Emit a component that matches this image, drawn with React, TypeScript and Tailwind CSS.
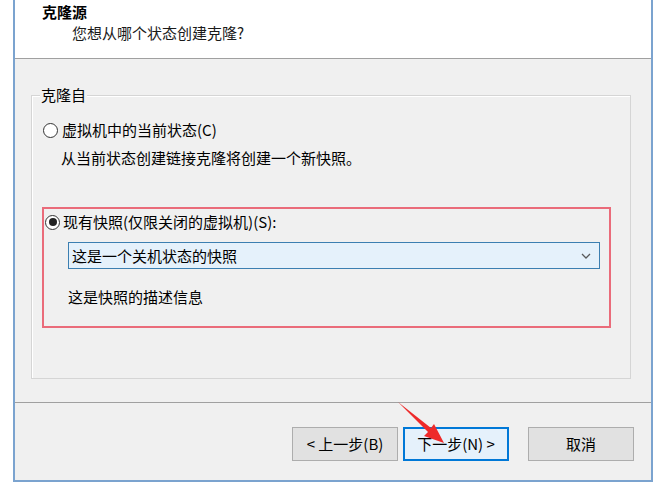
import React from 'react'

function Radio({ checked }: { checked?: boolean }) {
  return (
    <span className="flex h-[15px] w-[15px] shrink-0 items-center justify-center rounded-full border border-[#333333] bg-white">
      {checked && <span className="h-[8px] w-[8px] rounded-full bg-[#222222]" />}
    </span>
  )
}

function Button({ label, primary }: { label: string; primary?: boolean }) {
  return (
    <button
      type="button"
      className={
        primary
          ? 'h-[34px] w-[106px] border-2 border-[#0078d7] bg-[#e5f1fb] text-[15px] text-black'
          : 'h-[34px] w-[106px] border border-[#adadad] bg-[#e1e1e1] text-[15px] text-black'
      }
    >
      {label}
    </button>
  )
}

export default function App() {
  return (
    <div
      className="relative h-[484px] w-[659px] overflow-hidden bg-white"
      style={{ fontFamily: '"Noto Sans CJK SC", "Noto Sans", sans-serif' }}
    >
      <div className="ml-[13px] flex h-[482px] w-[640px] flex-col border-x-2 border-b-2 border-[#7ba3cf]">
        {/* header */}
        <div className="h-[60px] border-b border-[#a0a0a0] bg-white pl-[27px] pt-[2px]">
          <div className="text-[15px] font-bold leading-[20px] text-black">克隆源</div>
          <div className="pl-[30px] pt-[1px] text-[15px] leading-[20px] text-[#1a1a1a]">您想从哪个状态创建克隆?</div>
        </div>

        {/* body */}
        <div className="flex-1 bg-[#f0f0f0] pb-[23px] pl-[16px] pr-[20px] pt-[36px]">
          <div className="relative h-[284px] border border-[#d5d5d5] shadow-[inset_1px_1px_0_#ffffff]">
            <span className="absolute left-[8px] top-[-11px] bg-[#f0f0f0] px-[1px] text-[15px] leading-[20px] text-black">
              克隆自
            </span>

            <div className="flex items-center gap-[4px] pl-[11px] pt-[24px] text-[15px] leading-[20px] text-black">
              <Radio />
              <span>虚拟机中的当前状态(C)</span>
            </div>
            <div className="pl-[29px] pt-[8px] text-[15px] leading-[20px] text-black">
              从当前状态创建链接克隆将创建一个新快照。
            </div>

            <div className="ml-[10px] mr-[19px] mt-[39px] h-[121px] border-2 border-[#ea6b7a] pl-[1px] pt-[3px]">
              <div className="flex items-center gap-[3px] text-[15px] leading-[20px] text-black">
                <Radio checked />
                <span>现有快照(仅限关闭的虚拟机)(S):</span>
              </div>
              <div className="ml-[23px] mr-[9px] mt-[10px] flex h-[27px] items-center justify-between border border-[#3c7fb1] bg-[#e5f1fb] pl-[3px] pr-[8px] text-[15px] text-black">
                <span>这是一个关机状态的快照</span>
                <svg width="10" height="6" viewBox="0 0 10 6" fill="none">
                  <path d="M1 1l4 4 4-4" stroke="#5a5a5a" strokeWidth="1.3" />
                </svg>
              </div>
              <div className="pl-[23px] pt-[18px] text-[15px] leading-[20px] text-black">这是快照的描述信息</div>
            </div>
          </div>
        </div>

        {/* footer */}
        <div className="flex h-[78px] items-start justify-end border-t border-[#a0a0a0] bg-[#f0f0f0] pr-[17px] pt-[24px]">
          <Button label="< 上一步(B)" />
          <div className="w-[5px]" />
          <Button label="下一步(N) >" primary />
          <div className="w-[19px]" />
          <Button label="取消" />
        </div>
      </div>

      {/* annotation arrow */}
      <svg className="pointer-events-none absolute left-0 top-0" width="659" height="484">
        <polygon
          points="398,402 431,428 434,424 444,443 424,436 428,432"
          fill="#ee2a2a"
        />
      </svg>
    </div>
  )
}
